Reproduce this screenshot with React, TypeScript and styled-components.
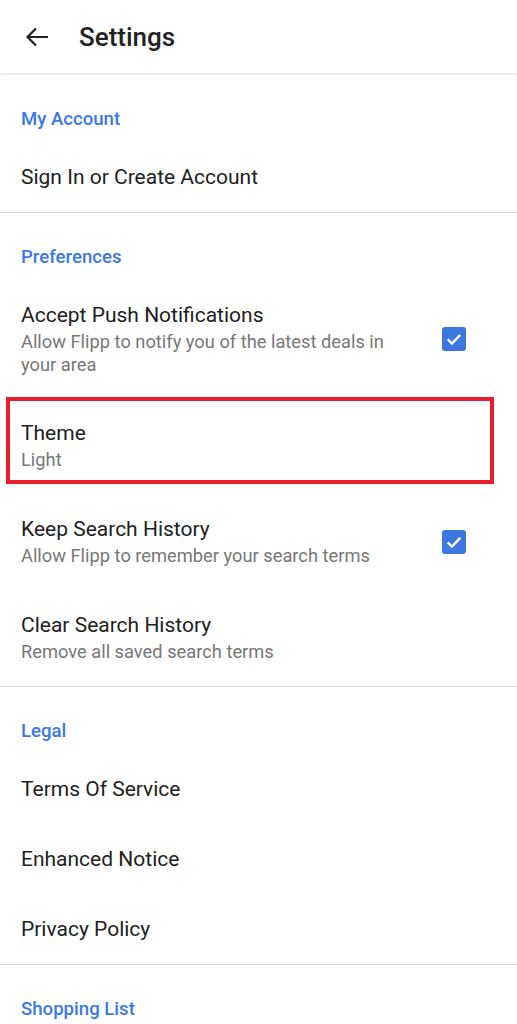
import styled, { createGlobalStyle } from 'styled-components';

const GlobalStyle = createGlobalStyle`
  body {
    margin: 0;
    background: #ffffff;
    font-family: Roboto, "Noto Sans", Arial, sans-serif;
  }
  * { box-sizing: border-box; }
`

const Page = styled.div`
  width: 517px;
  height: 1024px;
  overflow: hidden;
  background: #ffffff;
`

const TopBar = styled.header`
  height: 73px;
  margin-bottom: 2px;
  display: flex;
  align-items: center;
  gap: 30px;
  padding-left: 25px;
  background: #ffffff;
  box-shadow: 0 1px 3px rgba(0, 0, 0, 0.14);
  position: relative;
  z-index: 1;
`

const BackButton = styled.button`
  display: flex;
  align-items: center;
  justify-content: center;
  width: 24px;
  height: 24px;
  padding: 0;
  background: none;
  border: none;
  cursor: pointer;
`

const Title = styled.h1`
  margin: 0;
  font-size: 26px;
  font-weight: 500;
  color: #212121;
`

const Section = styled.section<{ $last?: boolean }>`
  border-bottom: ${({ $last }) => ($last ? 'none' : '1px solid #dedede')};
`

const SectionHeader = styled.div`
  padding: 32px 21px 11px;
  line-height: 24px;
  font-size: 18.6px;
  font-weight: 500;
  color: #3b78e7;
`

const Row = styled.div<{ $twoLine?: boolean }>`
  position: relative;
  display: flex;
  align-items: center;
  justify-content: space-between;
  padding: ${({ $twoLine }) => ($twoLine ? '22px 51px 22px 21px' : '0 51px 0 21px')};
  min-height: ${({ $twoLine }) => ($twoLine ? '96px' : '70px')};
  cursor: pointer;
`

const Texts = styled.div`
  display: flex;
  flex-direction: column;
  gap: 2px;
  max-width: 385px;
`

const RowTitle = styled.div`
  font-size: 21px;
  line-height: 27px;
  color: #212121;
`

const RowSub = styled.div`
  font-size: 18.3px;
  line-height: 22.5px;
  color: #777777;
`

const Check = styled.span`
  flex: none;
  width: 24px;
  height: 24px;
  border-radius: 3px;
  background: #3c78e0;
  display: flex;
  align-items: center;
  justify-content: center;
`

const Highlight = styled.div`
  position: absolute;
  top: -1px;
  left: 6px;
  width: 488px;
  height: 87px;
  border: 4px solid #ec1c2a;
  pointer-events: none;
`

function CheckBox() {
  return (
    <Check>
      <svg width="20" height="20" viewBox="0 0 24 24">
        <path d="M4.5 12.5l5 5L19.5 7" fill="none" stroke="#fff" strokeWidth="2.8" />
      </svg>
    </Check>
  )
}

export default function App() {
  return (
    <Page>
      <GlobalStyle />
      <TopBar>
        <BackButton aria-label="Back">
          <svg width="24" height="22" viewBox="0 0 24 22">
            <path d="M23 11H2.5M11 2.5L2.5 11l8.5 8.5" fill="none" stroke="#212121" strokeWidth="2.2" />
          </svg>
        </BackButton>
        <Title>Settings</Title>
      </TopBar>

      <Section>
        <SectionHeader>My Account</SectionHeader>
        <Row>
          <RowTitle>Sign In or Create Account</RowTitle>
        </Row>
      </Section>

      <Section>
        <SectionHeader>Preferences</SectionHeader>
        <Row $twoLine>
          <Texts>
            <RowTitle>Accept Push Notifications</RowTitle>
            <RowSub>Allow Flipp to notify you of the latest deals in your area</RowSub>
          </Texts>
          <CheckBox />
        </Row>
        <Row $twoLine>
          <Texts>
            <RowTitle>Theme</RowTitle>
            <RowSub>Light</RowSub>
          </Texts>
          <Highlight />
        </Row>
        <Row $twoLine>
          <Texts>
            <RowTitle>Keep Search History</RowTitle>
            <RowSub>Allow Flipp to remember your search terms</RowSub>
          </Texts>
          <CheckBox />
        </Row>
        <Row $twoLine>
          <Texts>
            <RowTitle>Clear Search History</RowTitle>
            <RowSub>Remove all saved search terms</RowSub>
          </Texts>
        </Row>
      </Section>

      <Section>
        <SectionHeader>Legal</SectionHeader>
        <Row>
          <RowTitle>Terms Of Service</RowTitle>
        </Row>
        <Row>
          <RowTitle>Enhanced Notice</RowTitle>
        </Row>
        <Row>
          <RowTitle>Privacy Policy</RowTitle>
        </Row>
      </Section>

      <Section $last>
        <SectionHeader>Shopping List</SectionHeader>
      </Section>
    </Page>
  )
}
